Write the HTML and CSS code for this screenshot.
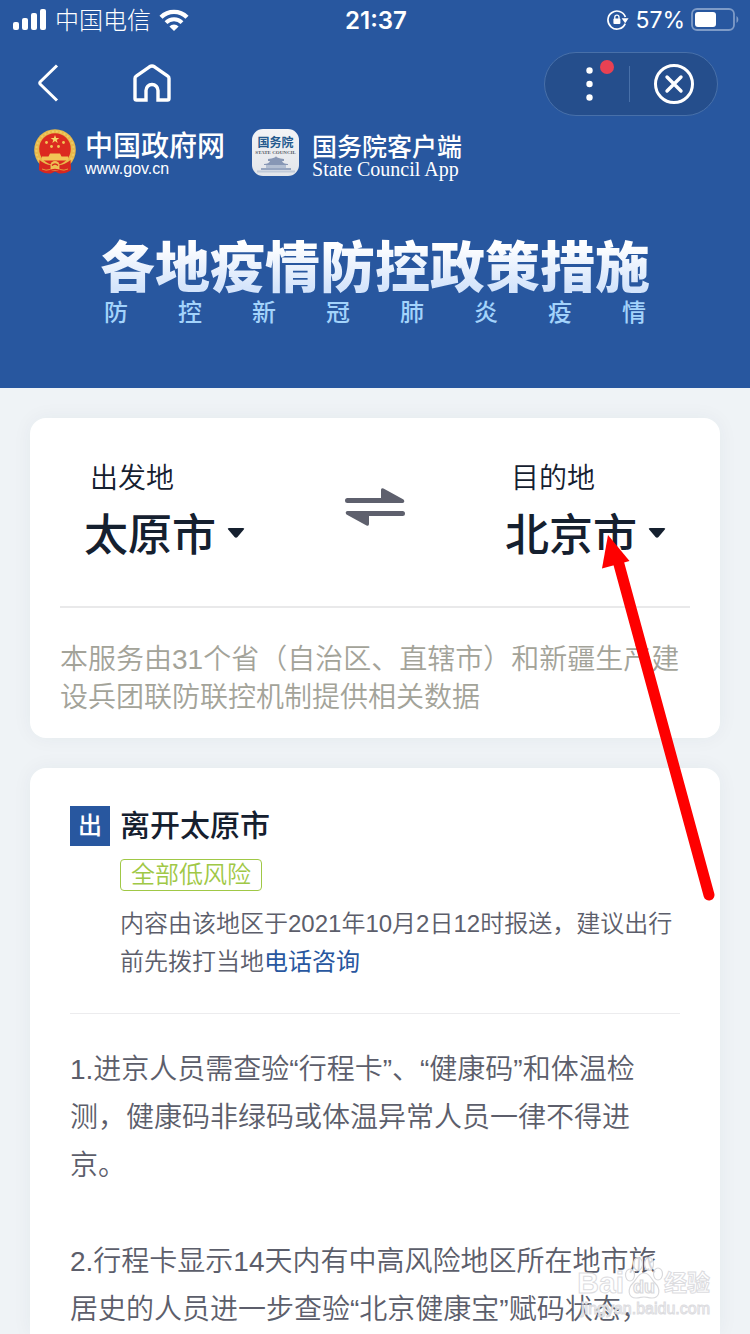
FILE: index.html
```html
<!DOCTYPE html>
<html lang="zh-CN">
<head>
  <meta charset="UTF-8" />
  <meta name="viewport" content="width=device-width, initial-scale=1.0"/>
  <title>各地疫情防控政策措施</title>
  <link rel="stylesheet" href="styles.css">
</head>
<body>
  <div class="screen">
    <header class="banner">
      <!-- status bar -->
      <div class="status-bar">
        <div class="status-left">
          <svg width="34" height="22" viewBox="0 0 34 22" fill="#fff">
            <rect x="0" y="13" width="6" height="8" rx="2"/>
            <rect x="9" y="9" width="6" height="12" rx="2"/>
            <rect x="18" y="4" width="6" height="17" rx="2"/>
            <rect x="27" y="0" width="6" height="21" rx="2"/>
          </svg>
          <span class="carrier">中国电信</span>
          <svg width="30" height="22" viewBox="0 0 30 22">
            <path d="M2 8.2a18.6 18.6 0 0 1 26 0" fill="none" stroke="#fff" stroke-width="4.4"/>
            <path d="M7 13.6a11.4 11.4 0 0 1 16 0" fill="none" stroke="#fff" stroke-width="4"/>
            <path d="M15 22l-4.6-4.6a6.6 6.6 0 0 1 9.2 0z" fill="#fff"/>
          </svg>
        </div>
        <span class="clock">21:37</span>
        <div class="status-right">
          <svg width="22" height="20" viewBox="0 0 22 20">
            <path d="M18.2 13.6A9 9 0 1 1 18.4 7" fill="none" stroke="#fff" stroke-width="1.7"/>
            <path d="M14.6 8.2h7l-3.4 5z" fill="#fff"/>
            <rect x="6.4" y="8.6" width="7" height="5.4" rx="1" fill="#fff"/>
            <path d="M7.8 9V7.2a2.1 2.1 0 0 1 4.2 0V9" fill="none" stroke="#fff" stroke-width="1.3"/>
          </svg>
          <span class="percent">57%</span>
          <svg width="48" height="24" viewBox="0 0 48 24">
            <rect x="1" y="1" width="42" height="21" rx="5" fill="none" stroke="#7e9bc7" stroke-width="1.8"/>
            <rect x="4" y="4" width="21" height="15" rx="3" fill="#fff"/>
            <path d="M45.5 8c2.4 1.600 2.400 5.500 0 7z" fill="#7e9bc7"/>
          </svg>
        </div>
      </div>

      <nav class="nav-bar">
        <div class="nav-left">
          <button class="icon-btn" aria-label="返回">
            <svg width="24" height="40" viewBox="0 0 24 40">
              <path d="M21 1.500L4.300 17.800q-1.200 1.200 0 2.400L21 36.500" fill="none" stroke="#fff" stroke-width="3"/>
            </svg>
          </button>
          <button class="icon-btn" aria-label="首页">
            <svg width="40" height="40" viewBox="0 0 40 40">
              <path d="M14 36H4.500Q3 36 3 34.500V14.500Q3 13 4.200 12.200L17.500 2.800Q20 1.200 22.500 2.800L35.800 12.200Q37 13 37 14.500V34.500Q37 36 35.500 36H26V26.500a6 6 0 0 0-12 0V36z" fill="none" stroke="#fff" stroke-width="3.400"/>
            </svg>
          </button>
        </div>
        <div class="capsule">
          <button class="icon-btn" aria-label="更多">
            <svg width="84" height="62" viewBox="0 0 84 62">
              <g fill="#fff">
                <circle cx="44.500" cy="17.500" r="3.200"/>
                <circle cx="44.500" cy="31" r="3.200"/>
                <circle cx="44.500" cy="44.500" r="3.200"/>
              </g>
              <circle cx="62" cy="14" r="7" fill="#e84153"/>
            </svg>
          </button>
          <span class="capsule-line"></span>
          <button class="icon-btn" aria-label="关闭">
            <svg width="87" height="62" viewBox="0 0 87 62" fill="none" stroke="#fff">
              <circle cx="44" cy="31" r="18.500" stroke-width="3"/>
              <path d="M37 24l14 14M51 24L37 38" stroke-width="3.400" stroke-linecap="round"/>
            </svg>
          </button>
        </div>
      </nav>

      <div class="brands">
        <a class="brand" href="#">
          <svg class="emblem" width="42" height="46" viewBox="0 0 42 46">
            <path d="M6 32l-1 9q5 4 12 3.500l4-2 4 2q7 .5 12-3.500l-1-9z" fill="#d8271f"/>
            <circle cx="21" cy="21" r="20.800" fill="#e8b94a"/>
            <circle cx="21" cy="21" r="18.600" fill="none" stroke="#efc964" stroke-width="2" stroke-dasharray="2 2"/>
            <circle cx="21" cy="20" r="15.800" fill="#dc2a20"/>
            <path d="M21 6l1.100 3h3.200l-2.600 1.900 1 3.100-2.700-1.900-2.700 1.900 1-3.100-2.600-1.900h3.200z" fill="#f7d568"/>
            <g fill="#f2c556">
              <circle cx="12.500" cy="13.500" r="1.400"/>
              <circle cx="29.500" cy="13.500" r="1.400"/>
              <circle cx="17.500" cy="17.500" r="1.400"/>
              <circle cx="24.500" cy="17.500" r="1.400"/>
              <path d="M16 24.500h10l1.500 3H34v4H8v-4h6.500z"/>
            </g>
            <path d="M5.500 31q6 5 11.500 5l-1 7q-6 1-11-2zM36.500 31q-6 5-11.500 5l1 7q6 1 11-2z" fill="#d8271f"/>
            <circle cx="21" cy="36.500" r="4.500" fill="#eec053"/>
            <path d="M18 36.500q3-3 6 0M15 42q6-3 12 0" fill="none" stroke="#d8271f" stroke-width="1.500"/>
            <path d="M8 40q4 2 8 .5M34 40q-4 2-8 .5" fill="none" stroke="#e39a3c" stroke-width="1"/>
          </svg>
          <span class="brand-text">
            <span class="brand-gov">中国政府网</span>
            <span class="brand-url">www.gov.cn</span>
          </span>
        </a>
        <a class="brand" href="#">
          <span class="app-icon">
            <span class="app-name">国务院</span>
            <span class="app-sub">STATE COUNCIL</span>
            <svg width="40" height="17" viewBox="0 0 40 17">
              <path d="M12 3q8-1 8-3 0 2 8 3v2H12zM8 8q5 0 6-3h12q1 3 6 3v1H8z" fill="#8797b5"/>
              <path d="M10 9h20v3H10z" fill="#b3bfd2"/>
              <path d="M5 12h30v2H5z" fill="#97a6c0"/>
              <path d="M1 14.500h38v2H1z" fill="#c0cad9"/>
            </svg>
          </span>
          <span class="brand-text">
            <span class="brand-app">国务院客户端</span>
            <span class="brand-en">State Council App</span>
          </span>
        </a>
      </div>

      <div class="headline">
        <h1>各地疫情防控政策措施</h1>
        <p><span>防</span><span>控</span><span>新</span><span>冠</span><span>肺</span><span>炎</span><span>疫</span><span>情</span></p>
      </div>
    </header>

    <main>
      <section class="card route-card">
        <div class="route">
          <div class="place">
            <label for="from">出发地</label>
            <div class="picker">
              <select id="from"><option>太原市</option></select>
              <svg width="18" height="16" viewBox="0 0 18 16"><path d="M2 1h14q2 0 .8 1.500l-6.300 7.500q-1.500 1.500-3 0L1.200 2.500Q0 1 2 1z" fill="#15202f"/></svg>
            </div>
          </div>
          <button class="icon-btn" aria-label="交换">
            <svg width="60" height="50" viewBox="0 0 60 50" fill="#5e606d">
              <path d="M2.500 11H36V3q0-2.500 2.500-1.500L58.500 12.500q2 3-1 3.500H2.500a2.500 2.500 0 0 1 0-5z"/>
              <path d="M57.500 29H24v8q0 2.500-2.500 1.500L1.500 27.500q-2-3 1-3.500h55a2.500 2.500 0 0 1 0 5z"/>
            </svg>
          </button>
          <div class="place">
            <label for="to">目的地</label>
            <div class="picker">
              <select id="to"><option>北京市</option></select>
              <svg width="18" height="16" viewBox="0 0 18 16"><path d="M2 1h14q2 0 .8 1.500l-6.300 7.500q-1.500 1.500-3 0L1.200 2.500Q0 1 2 1z" fill="#15202f"/></svg>
            </div>
          </div>
        </div>
        <p class="source">本服务由31个省（自治区、直辖市）和新疆生产建设兵团联防联控机制提供相关数据</p>
      </section>

      <section class="card policy-card">
        <div class="policy-head">
          <span class="badge">出</span>
          <div class="policy-info">
            <h2>离开太原市</h2>
            <span class="risk">全部低风险</span>
            <p class="note">内容由该地区于2021年10月2日12时报送，建议出行前先拨打当地<a href="#">电话咨询</a></p>
          </div>
        </div>
        <div class="policy-body">
          <p>1.进京人员需查验“行程卡”、“健康码”和体温检测，健康码非绿码或体温异常人员一律不得进京。</p>
          <p>2.行程卡显示14天内有中高风险地区所在地市旅居史的人员进一步查验“北京健康宝”赋码状态，</p>
        </div>
      </section>
    </main>

    <!-- pointer to the destination picker -->
    <svg class="pointer" width="116" height="370" viewBox="0 0 116 370">
      <path d="M17 22L109 360" stroke="#fe0000" stroke-width="11" stroke-linecap="round"/>
      <path d="M8 0L29.500 26 2 33.500z" fill="#fe0000"/>
    </svg>

    <div class="watermark">
      <div class="mark-row">
        <span class="mark-bai">Bai</span>
        <svg width="40" height="44" viewBox="0 0 40 44" fill="#fff" fill-opacity=".75" stroke="#d9d9dc" stroke-width="1.200">
          <ellipse cx="6" cy="19" rx="4.500" ry="6"/>
          <ellipse cx="14" cy="8" rx="4.500" ry="6.500"/>
          <ellipse cx="25" cy="8" rx="4.500" ry="6.500"/>
          <ellipse cx="34" cy="18" rx="4.500" ry="6"/>
          <path d="M20 17c6 0 7 6 11 10 6 6 5 15-3 15-4 0-5-1-8-1s-4 1-8 1c-8 0-9-9-3-15 4-4 5-10 11-10z"/>
          <text class="mark-du" x="20" y="37" text-anchor="middle">du</text>
        </svg>
        <span class="mark-jy">经验</span>
      </div>
      <span class="mark-url">jingyan.baidu.com</span>
    </div>
  </div>
</body>
</html>
```

FILE: styles.css
```css
* {
  margin: 0;
  padding: 0;
  box-sizing: border-box;
}

body {
  font-family: "Liberation Sans", "Noto Sans CJK SC", sans-serif;
  background: #eff3f6;
  color: #5c5e6b;
}

a {
  color: inherit;
  text-decoration: none;
}

svg {
  display: block;
  flex: none;
}

.screen {
  position: relative;
  min-height: 100vh;
  display: flex;
  flex-direction: column;
  overflow: hidden;
}

.icon-btn {
  background: none;
  border: none;
  cursor: pointer;
}

/* Banner */
.banner {
  background: #28579f;
  color: #fff;
  padding-bottom: 61px;
}

.status-bar {
  display: grid;
  grid-template-columns: 1fr auto 1fr;
  align-items: center;
  height: 40px;
  padding: 0 11px 0 13px;
}

.status-left,
.status-right {
  display: flex;
  align-items: center;
  gap: 8px;
}

.status-right {
  justify-content: flex-end;
  gap: 6px;
}

.carrier {
  font-family: "Noto Sans CJK SC", sans-serif;
  font-size: 24px;
  font-weight: 300;
  line-height: 32px;
  padding-bottom: 2px;
}

.clock {
  font-family: Inter, sans-serif;
  font-size: 24px;
  font-weight: 600;
}

.percent {
  font-family: Inter, sans-serif;
  font-size: 23px;
}

.nav-bar {
  display: flex;
  justify-content: space-between;
  align-items: center;
  padding: 12px 32px 0 36px;
}

.nav-left {
  display: flex;
  gap: 72px;
}

.capsule {
  display: flex;
  align-items: center;
  height: 64px;
  background: #254e8c;
  border: 1px solid #4870a9;
  border-radius: 32px;
}

.capsule-line {
  width: 1px;
  height: 36px;
  background: #4870a9;
}

.brands {
  display: flex;
  gap: 27px;
  padding: 12px 34px 0;
}

.brand {
  display: flex;
  align-items: center;
  gap: 9px;
  height: 48px;
}

.brand + .brand {
  gap: 13px;
}

.brand-text {
  display: flex;
  flex-direction: column;
  padding-top: 8px;
}

.brand-gov,
.brand-app {
  font-size: 28px;
  font-weight: 500;
  line-height: 26px;
}

.brand-app {
  font-size: 25px;
}

.brand-url,
.brand-en {
  font-size: 16px;
  line-height: 18px;
}

.brand-en {
  font-family: "Liberation Serif", serif;
  font-size: 20px;
}

.app-icon {
  display: flex;
  flex-direction: column;
  align-items: center;
  width: 47px;
  height: 47px;
  padding-top: 7px;
  border-radius: 11px;
  background: linear-gradient(#f3f4f6, #e2e5ea);
  overflow: hidden;
}

.app-name {
  color: #245a8e;
  font-size: 12px;
  font-weight: 700;
  line-height: 14px;
}

.app-sub {
  color: #555b66;
  font-family: "Liberation Serif", serif;
  font-size: 5px;
  font-weight: 700;
  line-height: 6px;
}

.headline {
  width: 550px;
  margin: 51px auto 0;
}

.headline h1 {
  font-family: "Noto Sans CJK SC", sans-serif;
  font-size: 55px;
  font-weight: 900;
  line-height: 72px;
  white-space: nowrap;
  color: transparent;
  background: linear-gradient(#fff 25%, #d4e4fb 85%);
  -webkit-background-clip: text;
  background-clip: text;
}

.headline p {
  display: flex;
  justify-content: space-between;
  padding: 0 4px;
  color: #a3d3fb;
  font-size: 24px;
  font-weight: 500;
  line-height: 28px;
}

/* Cards */
main {
  flex: 1;
  display: flex;
  flex-direction: column;
  gap: 30px;
  padding: 30px 30px 0;
}

.card {
  background: #fff;
  border-radius: 16px;
  box-shadow: 0 0 20px rgba(30, 60, 80, 0.05);
}

.route-card {
  padding: 0 30px 21px;
}

.route {
  display: flex;
  justify-content: space-between;
  align-items: center;
  padding: 40px 24px;
  border-bottom: 2px solid #e9e9ea;
}

.place {
  display: flex;
  flex-direction: column;
  gap: 4px;
  color: #15202f;
}

.place label {
  padding-left: 6px;
  font-size: 28px;
  font-weight: 350;
  line-height: 42px;
}

.picker {
  display: flex;
  align-items: center;
  gap: 11px;
}

.picker select {
  appearance: none;
  height: 62px;
  border: none;
  background: none;
  color: inherit;
  font-family: inherit;
  font-size: 44px;
  font-weight: 500;
  cursor: pointer;
}

.source {
  padding-top: 33px;
  color: #a3a399;
  font-size: 28px;
  font-weight: 350;
  line-height: 38px;
}

.policy-card {
  flex: 1;
  padding: 38px 40px 0;
  border-radius: 16px 16px 0 0;
}

.policy-head {
  display: flex;
  gap: 10px;
  padding-bottom: 32px;
  border-bottom: 1px solid #ececee;
}

.badge {
  flex: none;
  width: 40px;
  height: 40px;
  background: #28579f;
  color: #fff;
  font-size: 24px;
  font-weight: 500;
  line-height: 40px;
  text-align: center;
}

.policy-info h2 {
  color: #15202f;
  font-size: 30px;
  font-weight: 500;
  line-height: 40px;
}

.risk {
  display: block;
  width: fit-content;
  margin: 13px 0 14px;
  padding: 0 10px;
  border: 1px solid #a0c846;
  border-radius: 4px;
  color: #a0c846;
  font-size: 24px;
  font-weight: 350;
  line-height: 30px;
}

.note {
  font-size: 24px;
  font-weight: 350;
  line-height: 38px;
}

.note a {
  color: #28579f;
  font-weight: 400;
}

.policy-body {
  display: flex;
  flex-direction: column;
  gap: 48px;
  padding-top: 32px;
  font-size: 28px;
  font-weight: 350;
  line-height: 48px;
}

/* Overlays */
.pointer {
  position: absolute;
  top: 535px;
  left: 600px;
  pointer-events: none;
}

.watermark {
  position: absolute;
  right: 40px;
  bottom: 16px;
  display: flex;
  flex-direction: column;
  align-items: flex-end;
  color: rgba(255, 255, 255, 0.75);
  -webkit-text-stroke: 1px #dcdcdf;
  pointer-events: none;
}

.mark-row {
  display: flex;
  align-items: flex-end;
}

.mark-bai {
  font-size: 30px;
  font-weight: 700;
  line-height: 34px;
}

.mark-du {
  font-size: 18px;
  font-weight: 700;
}

.mark-jy {
  font-size: 23px;
  font-weight: 700;
  line-height: 34px;
}

.mark-url {
  font-size: 16px;
  line-height: 18px;
}
```
